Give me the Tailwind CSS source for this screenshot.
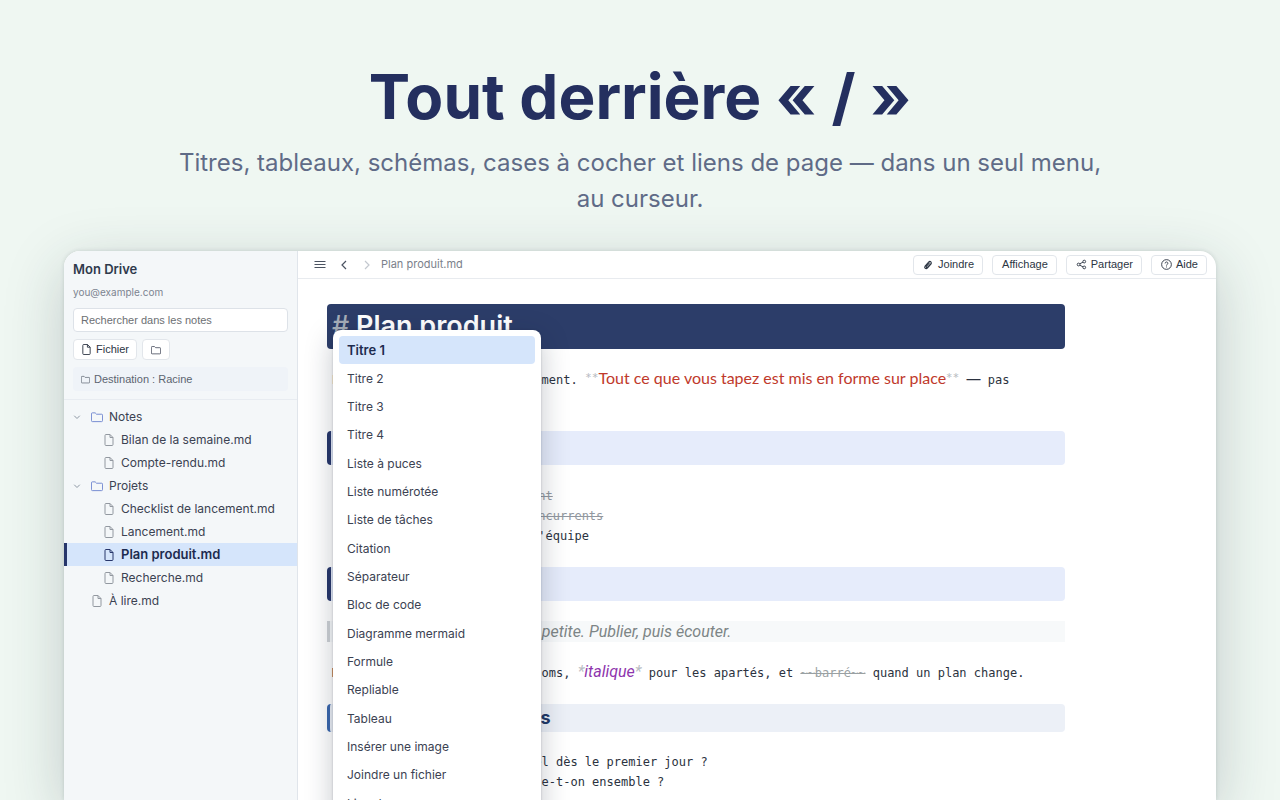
<!DOCTYPE html>
<html lang="fr">
<head>
    <meta charset="utf-8">
    <meta name="viewport" content="width=device-width, initial-scale=1">
    <title>Tout derrière « / »</title>
    <script src="https://cdn.jsdelivr.net/npm/@tailwindcss/browser@4"></script>
</head>
<body class="flex flex-col h-screen overflow-hidden bg-[#eff7f2] font-['Inter',sans-serif]">

    <!-- shared icons -->
    <svg class="hidden">
        <symbol id="file" viewBox="0 0 12 12" fill="none" stroke="currentColor" stroke-linejoin="round">
            <path d="M7 0.500H3A1 1 0 0 0 2 1.500V10.500A1 1 0 0 0 3 11.500H9A1 1 0 0 0 10 10.500V3.500L7 0.500V3.500H10"/>
        </symbol>
        <symbol id="folder" viewBox="0 0 13 13" fill="none" stroke="currentColor" stroke-linejoin="round">
            <path d="M0.500 3A1 1 0 0 1 1.500 2H4.500L6 3.500H11.500A1 1 0 0 1 12.500 4.500V10.500A1 1 0 0 1 11.500 11.500H1.500A1 1 0 0 1 0.500 10.500Z"/>
        </symbol>
        <symbol id="down" viewBox="0 0 8 8" fill="none" stroke="currentColor" stroke-linecap="round" stroke-linejoin="round">
            <path d="M1.500 3L4 5.500L6.500 3"/>
        </symbol>
    </svg>

    <header class="pt-16 px-40 text-center">
        <h1 class="text-[62px] leading-[66px] font-bold text-[#242f5f]">Tout derrière « / »</h1>
        <p class="max-w-[940px] mx-auto mt-[15px] text-2xl leading-[36px] text-[#5f6b87]">Titres, tableaux, schémas, cases à cocher et liens de page — dans un seul menu, au curseur.</p>
    </header>

    <main class="relative flex flex-1 mt-[34px] mx-16 rounded-t-2xl overflow-hidden bg-white shadow-[0_16px_60px_rgba(30,50,60,0.22),0_0_4px_rgba(30,50,60,0.15)]">

        <aside class="w-[234px] shrink-0 bg-[#f4f7f9] border-r border-[#e0e5eb] text-[#3b4252]">
            <div class="px-[9px] pt-[9px] pb-2 border-b border-[#e8ecf1]">
                <h2 class="text-[13px] leading-[18px] font-semibold text-[#2f3a4c]">Mon Drive</h2>
                <p class="mt-[7px] text-[10px] leading-[14px] text-[#7c8490]">you@example.com</p>
                <input type="text" aria-label="Rechercher dans les notes" placeholder="Rechercher dans les notes" class="block w-full h-6 mt-[9px] px-[7px] bg-white border border-[#dde2e8] rounded font-['Liberation_Sans',sans-serif] text-[11px] placeholder:text-[#6c6f73]">
                <div class="flex gap-[5px] mt-[7px]">
                    <button type="button" class="flex items-center gap-1 h-[21px] px-[7px] bg-white border border-[#e2e6eb] rounded font-['Liberation_Sans',sans-serif] text-[11px] text-[#2c3543]">
                        <svg class="size-[11px]"><use href="#file"/></svg>Fichier
                    </button>
                    <button type="button" aria-label="Nouveau dossier" class="flex items-center h-[21px] px-2 bg-white border border-[#e2e6eb] rounded text-[#3b4252]">
                        <svg class="size-[10px]"><use href="#folder"/></svg>
                    </button>
                </div>
                <p class="flex items-center gap-1 h-6 mt-[7px] px-2 rounded bg-[#eff3f8] font-['Liberation_Sans',sans-serif] text-[11px] text-[#5c6470]">
                    <svg class="size-[9px]"><use href="#folder"/></svg>Destination : Racine
                </p>
            </div>
            <ul class="pt-[5px] text-xs leading-[23px]">
                <li class="flex items-center pl-[9px]"><svg class="size-2 text-[#8c96a3]"><use href="#down"/></svg><svg class="size-3 ml-[10px] mr-[6px] text-[#6f86cf]"><use href="#folder"/></svg>Notes</li>
                <li class="flex items-center pl-[39px]"><svg class="size-3 mr-[6px] text-[#9298a0]"><use href="#file"/></svg>Bilan de la semaine.md</li>
                <li class="flex items-center pl-[39px]"><svg class="size-3 mr-[6px] text-[#9298a0]"><use href="#file"/></svg>Compte-rendu.md</li>
                <li class="flex items-center pl-[9px]"><svg class="size-2 text-[#8c96a3]"><use href="#down"/></svg><svg class="size-3 ml-[10px] mr-[6px] text-[#6f86cf]"><use href="#folder"/></svg>Projets</li>
                <li class="flex items-center pl-[39px]"><svg class="size-3 mr-[6px] text-[#9298a0]"><use href="#file"/></svg>Checklist de lancement.md</li>
                <li class="flex items-center pl-[39px]"><svg class="size-3 mr-[6px] text-[#9298a0]"><use href="#file"/></svg>Lancement.md</li>
                <li class="flex items-center h-[23px] pl-9 border-l-3 border-[#27366b] bg-[#d5e5fb] text-[13px] font-semibold text-[#1d2b4f]"><svg class="size-3 mr-[6px] text-[#27366b]"><use href="#file"/></svg>Plan produit.md</li>
                <li class="flex items-center pl-[39px]"><svg class="size-3 mr-[6px] text-[#9298a0]"><use href="#file"/></svg>Recherche.md</li>
                <li class="flex items-center pl-[27px]"><svg class="size-3 mr-[6px] text-[#9298a0]"><use href="#file"/></svg>À lire.md</li>
            </ul>
        </aside>

        <section class="flex-1 min-w-0">
            <div class="flex items-center h-7 pl-4 pr-[9px] border-b border-[#e8ebef] text-[#4b5361]">
                <button type="button" aria-label="Menu"><svg class="block size-3" viewBox="0 0 12 12" stroke="currentColor"><path d="M0.500 2.500H11.500M0.500 5.500H11.500M0.500 8.500H11.500"/></svg></button>
                <button type="button" aria-label="Précédent" class="ml-3"><svg class="block size-3" viewBox="0 0 12 12" fill="none" stroke="currentColor" stroke-width="1.200"><path d="M8 2L4 6L8 10"/></svg></button>
                <button type="button" aria-label="Suivant" class="ml-[11px] text-[#c3c8cf]"><svg class="block size-3" viewBox="0 0 12 12" fill="none" stroke="currentColor" stroke-width="1.200"><path d="M4 2L8 6L4 10"/></svg></button>
                <span class="ml-2 text-[11px] text-[#7b818b]">Plan produit.md</span>
                <div class="flex gap-[9px] ml-auto font-['Liberation_Sans',sans-serif] text-[11px] text-[#2c3543]">
                    <button type="button" class="flex items-center gap-[5px] h-5 pl-[9px] pr-2 border border-[#e2e6eb] rounded">
                        <svg class="size-[10px]" viewBox="0 0 12 12" fill="none" stroke="currentColor" stroke-width="1.300" stroke-linecap="round"><path d="M10 4.500L5.500 9.500C3.500 11.500 1 9.500 2.500 7.300L7 2.300C8.500 0.800 10.800 2.500 9.500 4.300L5.300 8.800C4.300 9.600 3.200 8.700 4 7.700L7.700 3.600"/></svg>Joindre
                    </button>
                    <button type="button" class="h-5 pl-[9px] pr-2 border border-[#e2e6eb] rounded">Affichage</button>
                    <button type="button" class="flex items-center gap-1 h-5 pl-[9px] pr-2 border border-[#e2e6eb] rounded">
                        <svg class="size-[11px]" viewBox="0 0 12 12" fill="none" stroke="currentColor"><circle cx="2.800" cy="6" r="1.500"/><circle cx="9" cy="2.800" r="1.500"/><circle cx="9" cy="9.200" r="1.500"/><path d="M4.200 5.200L7.700 3.400M4.200 6.800L7.700 8.600"/></svg>Partager
                    </button>
                    <button type="button" class="flex items-center gap-1 h-5 pl-[9px] pr-2 border border-[#e2e6eb] rounded">
                        <svg class="size-[11px]" viewBox="0 0 12 12" fill="none" stroke="currentColor"><circle cx="6" cy="6" r="5.300"/><path d="M4.500 4.800C4.500 2.700 7.500 2.800 7.500 4.700C7.500 5.800 6 5.800 6 7.200M6 8.200V9.200"/></svg>Aide
                    </button>
                </div>
            </div>

            <article class="max-w-[738px] ml-[29px] mt-[25px] mr-8 font-['DejaVu_Sans_Mono',monospace] text-xs leading-5 text-[#2b3240] whitespace-nowrap">
                <h1 class="h-[45px] px-[5px] rounded bg-[#2c3d69] font-['Inter',sans-serif] text-[27px] leading-[43px] font-semibold text-white"><span class="font-medium text-[#a5adb8]">#</span> Plan produit</h1>
                <p class="mt-[21px] px-[5px]">Écrivez le texte ici, directement. <span class="font-['Lato',sans-serif] text-base leading-none text-[#c0392b]"><span class="text-[#b9bdc3]">**</span>Tout ce que vous tapez est mis en forme sur place<span class="text-[#b9bdc3]">**</span></span> <span class="font-['Inter',sans-serif] text-sm leading-none">—</span> pas<br>&nbsp;de volet d'aperçu.</p>
                <h2 class="h-[34px] mt-[21px] px-1 rounded border-l-4 border-[#27366b] bg-[#e6ecfb] font-['Inter',sans-serif] text-xl leading-[34px] font-semibold text-[#27366b]">## À faire</h2>
                <ul class="mt-[21px] px-[9px]">
                    <li class="text-[#9298a0] line-through">- [x] Préparer notre lancement</li>
                    <li class="text-[#9298a0] line-through">- [x] Comparer avec trois concurrents</li>
                    <li>- [ ] Valider le plan avec l'équipe</li>
                </ul>
                <h2 class="h-[34px] mt-[21px] px-1 rounded border-l-4 border-[#27366b] bg-[#e6ecfb] font-['Inter',sans-serif] text-xl leading-[34px] font-semibold text-[#27366b]">## Principe</h2>
                <blockquote class="h-[21px] mt-5 px-[5px] border-l-3 border-[#cfd2d6] bg-[#f7f9fa] font-['Roboto',sans-serif] text-base leading-[21px] italic text-[#7d8586]">&gt; Commencer avec la version petite. Publier, puis écouter.</blockquote>
                <p class="mt-[21px] px-[5px]">Mettez en gras ici tous les noms, <span class="font-['Roboto',sans-serif] text-base leading-none italic text-[#8e35ad]"><span class="text-[#b9bdc3]">*</span>italique<span class="text-[#b9bdc3]">*</span></span> pour les apartés, et <s class="text-[#9aa1a3]">~~barré~~</s> quand un plan change.</p>
                <h3 class="h-7 mt-[21px] px-[9px] rounded border-l-3 border-[#3b67ad] bg-[#ecf0f7] font-['Inter',sans-serif] text-lg leading-7 font-bold text-[#1f3a68]">### Questions ouvertes</h3>
                <ul class="mt-5 px-[5px]">
                    <li>- Faut-il créer un mode manuel dès le premier jour ?</li>
                    <li>- Quels vrais chiffres regarde-t-on ensemble ?</li>
                </ul>
            </article>
        </section>

        <!-- slash menu, opened at the cursor -->
        <div role="menu" class="absolute left-[269px] top-[79px] grid auto-rows-fr w-[208px] h-[494px] p-[6px] rounded-lg bg-white text-xs text-[#3b4252] shadow-[0_8px_28px_rgba(20,30,50,0.25),0_0_2px_rgba(20,30,50,0.25)]">
            <button type="button" role="menuitem" class="px-2 rounded bg-[#d5e5fb] text-left text-[13px] font-semibold text-[#1d2b4f]">Titre 1</button>
            <button type="button" role="menuitem" class="px-2 text-left">Titre 2</button>
            <button type="button" role="menuitem" class="px-2 text-left">Titre 3</button>
            <button type="button" role="menuitem" class="px-2 text-left">Titre 4</button>
            <button type="button" role="menuitem" class="px-2 text-left">Liste à puces</button>
            <button type="button" role="menuitem" class="px-2 text-left">Liste numérotée</button>
            <button type="button" role="menuitem" class="px-2 text-left">Liste de tâches</button>
            <button type="button" role="menuitem" class="px-2 text-left">Citation</button>
            <button type="button" role="menuitem" class="px-2 text-left">Séparateur</button>
            <button type="button" role="menuitem" class="px-2 text-left">Bloc de code</button>
            <button type="button" role="menuitem" class="px-2 text-left">Diagramme mermaid</button>
            <button type="button" role="menuitem" class="px-2 text-left">Formule</button>
            <button type="button" role="menuitem" class="px-2 text-left">Repliable</button>
            <button type="button" role="menuitem" class="px-2 text-left">Tableau</button>
            <button type="button" role="menuitem" class="px-2 text-left">Insérer une image</button>
            <button type="button" role="menuitem" class="px-2 text-left">Joindre un fichier</button>
            <button type="button" role="menuitem" class="px-2 text-left">Lien de page</button>
        </div>
    </main>

</body>
</html>
